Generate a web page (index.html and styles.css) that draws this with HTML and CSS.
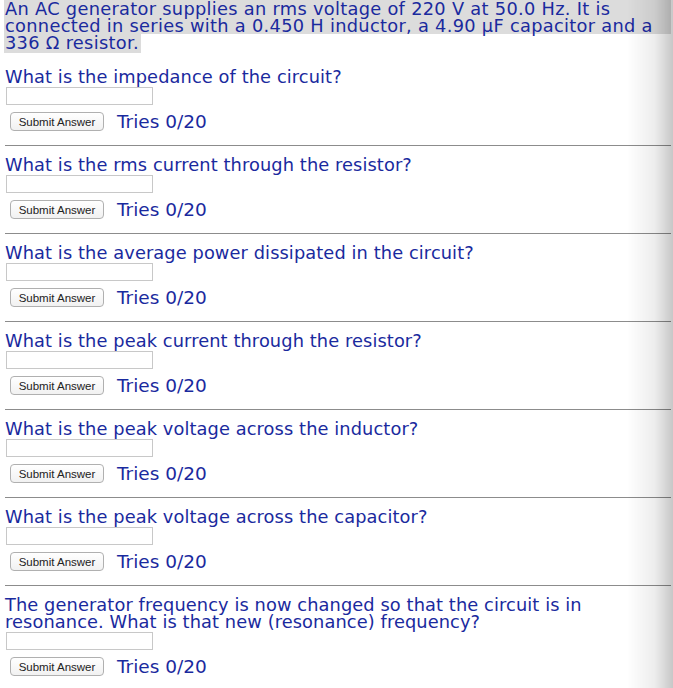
FILE: index.html
```html
<!DOCTYPE html>
<html>
<head>
<meta charset="utf-8">
<link rel="stylesheet" href="styles.css">
</head>
<body>
<div class="page">
  <div class="intro">An AC generator supplies an rms voltage of 220 V at 50.0 Hz. It is<br>connected in series with a 0.450 H inductor, a 4.90 μF capacitor and a<br><span class="last">336 Ω resistor.</span></div>

  <div class="part first">
    <div class="q">What is the impedance of the circuit?</div>
    <input class="answer" type="text">
    <div class="row"><button class="submit">Submit Answer</button><span class="tries">Tries 0/20</span></div>
  </div>
  <hr class="sep">
  <div class="part">
    <div class="q">What is the rms current through the resistor?</div>
    <input class="answer" type="text">
    <div class="row"><button class="submit">Submit Answer</button><span class="tries">Tries 0/20</span></div>
  </div>
  <hr class="sep">
  <div class="part">
    <div class="q">What is the average power dissipated in the circuit?</div>
    <input class="answer" type="text">
    <div class="row"><button class="submit">Submit Answer</button><span class="tries">Tries 0/20</span></div>
  </div>
  <hr class="sep">
  <div class="part">
    <div class="q">What is the peak current through the resistor?</div>
    <input class="answer" type="text">
    <div class="row"><button class="submit">Submit Answer</button><span class="tries">Tries 0/20</span></div>
  </div>
  <hr class="sep">
  <div class="part">
    <div class="q">What is the peak voltage across the inductor?</div>
    <input class="answer" type="text">
    <div class="row"><button class="submit">Submit Answer</button><span class="tries">Tries 0/20</span></div>
  </div>
  <hr class="sep">
  <div class="part">
    <div class="q">What is the peak voltage across the capacitor?</div>
    <input class="answer" type="text">
    <div class="row"><button class="submit">Submit Answer</button><span class="tries">Tries 0/20</span></div>
  </div>
  <hr class="sep">
  <div class="part">
    <div class="q">The generator frequency is now changed so that the circuit is in<br>resonance. What is that new (resonance) frequency?</div>
    <input class="answer" type="text">
    <div class="row"><button class="submit">Submit Answer</button><span class="tries">Tries 0/20</span></div>
  </div>
</div>
<div class="shade"></div>
</body>
</html>
```

FILE: styles.css
```css
html, body {
  margin: 0;
  padding: 0;
  background: #ffffff;
}
body {
  font-family: "DejaVu Sans", Verdana, sans-serif;
  color: #1a2a9e;
  overflow: hidden;
}
.page {
  width: 667px;
  padding-left: 4px;
}
.intro {
  font-size: 17.8px;
  line-height: 17px;
  padding-left: 1px;
  letter-spacing: 0.3px;
  white-space: nowrap;
  background: linear-gradient(#dcdcdc, #dcdcdc) no-repeat 0 0 / 100% 34px;
}
.intro .last {
  background: #dcdcdc;
  padding-right: 2px;
  margin-left: -1px;
  padding-left: 1px;
}
.part {
  padding-left: 1px;
  padding-top: 10px;
}
.part.first {
  padding-top: 17px;
}
.q {
  font-size: 17.8px;
  line-height: 17px;
  letter-spacing: 0.1px;
  white-space: nowrap;
}
.answer {
  display: block;
  box-sizing: border-box;
  width: 147px;
  height: 18px;
  margin: 2px 0 0 1px;
  border: 1px solid #c8c8c8;
  padding: 0;
  background: #fff;
}
.row {
  display: flex;
  align-items: center;
  margin-top: 7px;
  height: 19px;
}
.submit {
  box-sizing: border-box;
  height: 19px;
  width: 94px;
  margin-left: 5px;
  padding: 0;
  font-family: "Liberation Sans", Arial, sans-serif;
  font-size: 11.5px;
  color: #222;
  background: linear-gradient(#ffffff, #f1f1f1);
  border: 1px solid #b0b0b0;
  border-radius: 4px;
}
.tries {
  font-size: 18.5px;
  margin-left: 13px;
  line-height: 19px;
}
.sep {
  margin: 14px 0 0 1px;
  border: 0;
  height: 1px;
  background: #8c8c8c;
  width: 666px;
}
.shade {
  position: fixed;
  top: 0;
  right: 0;
  width: 46px;
  height: 100%;
  pointer-events: none;
  background: linear-gradient(to right, rgba(0,0,0,0), rgba(0,0,0,0.07) 60%, rgba(0,0,0,0.22));
}
```
